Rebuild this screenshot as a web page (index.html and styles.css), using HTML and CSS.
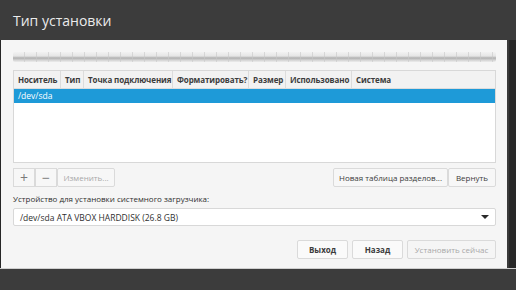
FILE: index.html
```html
<!DOCTYPE html>
<html lang="ru">
<head>
    <meta charset="UTF-8">
    <title>Тип установки</title>
    <link rel="stylesheet" href="styles.css">
</head>
<body>
    <div class="header">
        <h1 class="title">Тип установки</h1>
    </div>
    <div class="main">
        <div class="panel">
            <div class="progress"></div>

            <div class="table">
                <div class="table-head">
                    <div class="col c1">Носитель</div>
                    <div class="col c2">Тип</div>
                    <div class="col c3">Точка подключения</div>
                    <div class="col c4">Форматировать?</div>
                    <div class="col c5">Размер</div>
                    <div class="col c6">Использовано</div>
                    <div class="col c7">Система</div>
                </div>
                <div class="row selected">/dev/sda</div>
            </div>

            <div class="tools">
                <div class="group">
                    <button class="btn icon-btn">+</button>
                    <button class="btn icon-btn">&minus;</button>
                    <button class="btn disabled change-btn">Изменить...</button>
                </div>
                <div class="group">
                    <button class="btn new-btn">Новая таблица разделов...</button>
                    <button class="btn revert-btn">Вернуть</button>
                </div>
            </div>

            <div class="label">Устройство для установки системного загрузчика:</div>
            <div class="combo">
                <span>/dev/sda ATA VBOX HARDDISK (26.8 GB)</span>
                <span class="arrow"></span>
            </div>

            <div class="actions">
                <button class="btn action">Выход</button>
                <button class="btn action">Назад</button>
                <button class="btn action disabled install-btn">Установить сейчас</button>
            </div>
        </div>
        <div class="side"></div>
    </div>
    <div class="footer"></div>
</body>
</html>
```

FILE: styles.css
```css
body {
    margin: 0;
    background-color: #3c3c3c;
    font-family: 'Open Sans', 'Noto Sans', sans-serif;
    color: #3c3c3c;
    overflow: hidden;
}
.header {
    height: 40px;
    display: flex;
    align-items: center;
    padding-left: 13px;
}
.title {
    margin: 0;
    font-size: 14px;
    font-weight: normal;
    color: #ebebeb;
}
.main {
    display: flex;
    height: 228px;
}
.panel {
    width: 483px;
    background: #f5f5f5;
    border-left: 1px solid #262626;
    padding: 12px 11px 0 12px;
    box-sizing: content-box;
}
.side {
    flex: 1;
    border-left: 2px solid #3a3a3a;
    background: #282828;
}
.footer {
    height: 22px;
    border-top: 1px solid #cfcfcf;
    background: #3c3c3c;
}
.progress {
    height: 10px;
    border-radius: 2px;
    background:
        repeating-linear-gradient(90deg, transparent 0, transparent 11px, rgba(200, 200, 200, 0.6) 11px, rgba(200, 200, 200, 0.6) 12px),
        linear-gradient(#f2f2f2 0, #e6e6e6 40%, #b0b0b0 60%, #d2d2d2 80%, #ededed 100%);
}
.table {
    margin-top: 8px;
    height: 91px;
    background: #fff;
    border: 1px solid #d8d8d8;
}
.table-head {
    display: flex;
    height: 17px;
    background: #f2f2f2;
    border-bottom: 1px solid #dcdcdc;
}
.col {
    font-size: 8px;
    font-weight: bold;
    line-height: 17px;
    padding-left: 4px;
    border-right: 1px solid #dcdcdc;
    box-sizing: border-box;
    white-space: nowrap;
    overflow: hidden;
    letter-spacing: -0.1px;
}
.c1 { width: 47px; }
.c2 { width: 23px; }
.c3 { width: 89px; }
.c4 { width: 76px; }
.c5 { width: 37px; }
.c6 { width: 66px; }
.c7 { flex: 1; border-right: none; }
.row {
    height: 14px;
    line-height: 14px;
    font-size: 8.5px;
    padding-left: 4px;
}
.selected {
    background: #1e9ad8;
    color: #fff;
}
.tools {
    display: flex;
    justify-content: space-between;
    margin-top: 5px;
}
.group {
    display: flex;
}
.btn {
    height: 19px;
    padding: 0;
    border: 1px solid #dadada;
    background: #f7f7f7;
    font-family: 'Open Sans', 'Noto Sans', sans-serif;
    font-size: 8px;
    color: #3c3c3c;
    border-radius: 2px;
    box-sizing: border-box;
}
.icon-btn {
    width: 22px;
    font-size: 14px;
    line-height: 14px;
    color: #7a7a7a;
    border-radius: 0;
}
.change-btn {
    width: 58px;
}
.disabled {
    color: #a8a8a8;
}
.new-btn {
    width: 115px;
}
.revert-btn {
    width: 48px;
}
.label {
    margin-top: 6px;
    font-size: 8px;
    color: #2f2f2f;
    line-height: 12px;
}
.combo {
    margin-top: 3px;
    height: 18px;
    background: #fff;
    border: 1px solid #d8d8d8;
    border-radius: 2px;
    display: flex;
    align-items: center;
    justify-content: space-between;
    padding: 0 6px;
    font-size: 8.5px;
    color: #2f2f2f;
    box-sizing: border-box;
}
.arrow {
    width: 0;
    height: 0;
    border-left: 4px solid transparent;
    border-right: 4px solid transparent;
    border-top: 4px solid #2a2a2a;
}
.actions {
    display: flex;
    justify-content: flex-end;
    gap: 4px;
    margin-top: 14px;
}
.action {
    width: 51px;
    font-weight: bold;
    background: #fafafa;
}
.install-btn {
    width: 89px;
    font-weight: normal;
    background: #f5f5f5;
}
```
